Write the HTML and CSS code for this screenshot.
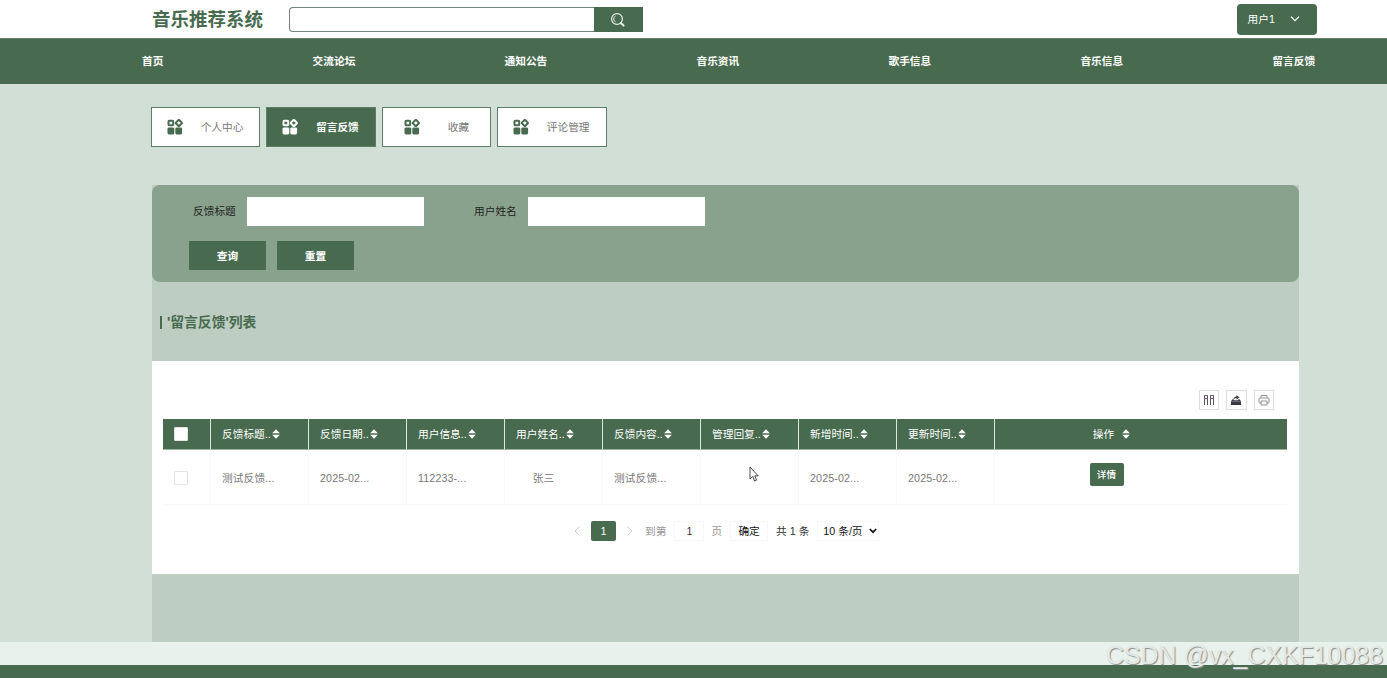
FILE: index.html
```
<!DOCTYPE html>
<html lang="zh-CN">
<head>
<meta charset="utf-8">
<title>音乐推荐系统</title>
<link rel="stylesheet" href="styles.css">
</head>
<body>
<svg width="0" height="0" class="defs">
	<symbol id="i-menu" viewBox="0 0 16 16">
		<rect x="1.5" y="1.7" width="4.7" height="4.5" rx=".8" fill="none" stroke="currentColor" stroke-width="2"/>
		<rect x="9.5" y="1.6" width="4.7" height="4.7" rx=".8" fill="none" stroke="currentColor" stroke-width="2" transform="rotate(45 11.85 3.95)"/>
		<rect x=".5" y="8.4" width="6.8" height="7" rx="1.4" fill="currentColor"/>
		<rect x="8.3" y="8.4" width="6.8" height="7" rx="1.4" fill="currentColor"/>
	</symbol>
	<symbol id="i-sort" viewBox="0 0 8 10">
		<path d="M4 .3 7.8 4.2H.2zM4 9.7 7.8 5.8H.2z" fill="currentColor"/>
	</symbol>
</svg>

<div class="header">
	<div class="logo">音乐推荐系统</div>
	<div class="search">
		<input type="text" class="search_txt">
		<a class="search_btn">
			<svg width="16" height="16" viewBox="0 0 16 16" fill="none" stroke="#e6f0e8"><circle cx="7" cy="7" r="5.4" stroke-width="1.2"/><path d="M5.6 10A3.3 3.3 0 0 1 5.6 4" stroke-width="1"/><path d="M10.8 11 13.6 13.6" stroke-width="2" stroke-linecap="round"/></svg>
		</a>
	</div>
	<div class="user">用户1
		<svg width="10" height="6" viewBox="0 0 10 6" fill="none" stroke="#fff" stroke-width="1.2"><path d="M1 .7 5 4.7 9 .7"/></svg>
	</div>
</div>

<ul class="nav">
	<li>首页</li>
	<li>交流论坛</li>
	<li>通知公告</li>
	<li>音乐资讯</li>
	<li>歌手信息</li>
	<li>音乐信息</li>
	<li>留言反馈</li>
</ul>

<ul class="tabs">
	<li><svg><use href="#i-menu"/></svg><span>个人中心</span></li>
	<li class="active"><svg><use href="#i-menu"/></svg><span>留言反馈</span></li>
	<li><svg><use href="#i-menu"/></svg><span>收藏</span></li>
	<li><svg><use href="#i-menu"/></svg><span>评论管理</span></li>
</ul>

<div class="main">
	<div class="filter">
		<div class="filter_row">
			<label>反馈标题</label><input type="text">
			<label>用户姓名</label><input type="text">
		</div>
		<div class="filter_btns">
			<a>查询</a>
			<a>重置</a>
		</div>
	</div>
	<h2 class="title">'留言反馈'列表</h2>

	<div class="list">
		<div class="tools">
			<a><svg width="12" height="12" viewBox="0 0 12 12" fill="none" stroke="#5c5262"><path d="M1.5 1.5h3v3h-3zM7.5 1.5h3v3h-3zM1.5 4.5V11M4.5 4.5V11M7.5 4.5V11M10.5 4.5V11"/></svg></a>
			<a><svg width="12" height="12" viewBox="0 0 12 12" fill="#3b3944"><path d="M1 7.2h10V11H1zM2.5 5.2h1.2v1h4.6v-1h1.2l1.3 1.7H1.2z"/><path d="M3.4 5.6C3.6 3.4 5 2.5 6.6 2.4V1L9.4 3.4 6.6 5.6V4.2C5.3 4.2 4.2 4.5 3.4 5.6z"/></svg></a>
			<a><svg width="12" height="12" viewBox="0 0 12 12" fill="none" stroke="#85898d" stroke-width=".9"><path d="M3 4V1.4h6V4M3 9H1.9Q1 9 1 8.1V5Q1 4 2 4h8q1 0 1 1v3.1Q11 9 10.1 9H9M3 7h6v4H3z"/></svg></a>
		</div>
		<table>
			<colgroup>
				<col class="c_check"><col class="c_txt"><col class="c_txt"><col class="c_txt"><col class="c_txt"><col class="c_txt"><col class="c_txt"><col class="c_txt"><col class="c_txt"><col>
			</colgroup>
			<tr>
				<th><i class="check"></i></th>
				<th>反馈标题..<svg><use href="#i-sort"/></svg></th>
				<th>反馈日期..<svg><use href="#i-sort"/></svg></th>
				<th>用户信息..<svg><use href="#i-sort"/></svg></th>
				<th>用户姓名..<svg><use href="#i-sort"/></svg></th>
				<th>反馈内容..<svg><use href="#i-sort"/></svg></th>
				<th>管理回复..<svg><use href="#i-sort"/></svg></th>
				<th>新增时间..<svg><use href="#i-sort"/></svg></th>
				<th>更新时间..<svg><use href="#i-sort"/></svg></th>
				<th class="op">操作<svg><use href="#i-sort"/></svg></th>
			</tr>
			<tr>
				<td><i class="check"></i></td>
				<td>测试反馈...</td>
				<td>2025-02...</td>
				<td>112233-...</td>
				<td class="name">张三</td>
				<td>测试反馈...</td>
				<td></td>
				<td>2025-02...</td>
				<td>2025-02...</td>
				<td class="op"><a class="btn">详情</a></td>
			</tr>
		</table>
		<div class="page">
			<svg class="arrow" viewBox="0 0 6 10"><path d="M5.5.7 1 5l4.5 4.3"/></svg>
			<span class="cur">1</span>
			<svg class="arrow" viewBox="0 0 6 10"><path d="M.5.7 5 5 .5 9.3"/></svg>
			<span class="go">到第</span>
			<span class="num">1</span>
			<span class="unit">页</span>
			<span class="ok">确定</span>
			<span class="total">共 1 条</span>
			<span class="limit">10 条/页<svg width="8" height="6" viewBox="0 0 8 6" fill="none" stroke="#111" stroke-width="1.7"><path d="M.8 1 4 4.2 7.2 1"/></svg></span>
		</div>
	</div>
</div>

<div class="copy"></div>
<div class="footer"></div>

<div class="watermark">CSDN @vx_CXKF10088</div>
<svg class="cursor" viewBox="0 0 10 16"><path d="M1 1v12l2.8-2.5L5.6 15l2-.9-1.9-4.2H9.2z" fill="#fff" stroke="#333" stroke-width=".9"/></svg>
</body>
</html>
```
FILE: styles.css
```
* {box-sizing:border-box;}
body {margin:0;height:678px;overflow:hidden;background:#d1dfd6;font:10.7px/16px "Liberation Sans","Noto Sans CJK SC",sans-serif;color:#333;}
ul {margin:0;padding:0;}
li {list-style:none;}
svg {flex:none;}
input {border:0;padding:0;background:#fff;outline:none;}
.defs {display:block;height:0;}

.header {height:38px;background:#fff;display:flex;padding-left:152px;}
.logo {width:137px;font-size:18.5px;line-height:39px;font-weight:bold;color:#486b4f;}
.search {width:353.5px;height:25px;margin-top:7px;display:flex;}
.search_txt {width:305px;border:1px solid #71857a;border-right:0;border-radius:4px 0 0 4px;}
.search_btn {width:49px;background:#486b4f;display:flex;align-items:center;justify-content:center;}
.user {width:80.5px;height:30.5px;margin:4px 70px 0 auto;padding:0 17px 0 11px;border-radius:4px;background:#486b4f;color:#fff;display:flex;align-items:center;justify-content:space-between;}

.nav {height:46px;background:#486b4f;display:flex;gap:149.2px;padding-left:142px;border-top:1px solid #5f7e68;}
.nav li {flex:none;color:#fff;font-weight:bold;line-height:45px;}

.tabs {display:flex;gap:6px;padding:23px 0 0 151px;}
.tabs li {width:109.4px;height:40px;background:#fff;border:1px solid #5f7e68;display:flex;align-items:center;justify-content:space-between;padding:0 16px 0 15px;color:#777;}
.tabs li svg {width:16px;height:16px;color:#486b4f;}
.tabs li:nth-child(3) {padding:0 21px;}
.tabs .active {background:#486b4f;color:#fff;font-weight:bold;}
.tabs .active svg {color:#fff;}

.main {width:1147px;height:457px;margin:38px 0 0 152px;background:#bdcdc1;}
.filter {height:97px;background:#89a28d;border-radius:8px;padding:12px 0 0 37px;}
.filter_row {display:flex;height:29px;align-items:center;}
.filter_row label {width:58px;padding:0 0 1px 4px;color:#222;}
.filter_row input {width:177px;height:29px;margin-right:46px;}
.filter_btns {display:flex;gap:11px;margin-top:15px;}
.filter_btns a {width:77px;height:29px;line-height:30px;background:#486b4f;color:#fff;font-weight:bold;text-align:center;}
.title {margin:34px 0 0 8px;height:13px;border-left:2px solid #486b4f;padding-left:5px;font-size:13.8px;line-height:13px;color:#486b4f;}

.list {margin-top:32px;height:213px;background:#fff;padding:29px 12px 0 11px;}
.tools {display:flex;justify-content:flex-end;gap:7px;padding-right:13px;height:29px;}
.tools a {width:20.5px;height:20px;border:1px solid #ddd;display:flex;align-items:center;justify-content:center;}
table {width:1124px;border-collapse:separate;border-spacing:0;table-layout:fixed;}
.c_check {width:48px;}
.c_txt {width:98px;}
th {height:31px;padding:0 0 0 11px;background:#486b4f;color:#fff;font-weight:normal;text-align:left;border-right:1px solid #dde6df;border-bottom:1px solid #9db3a2;white-space:nowrap;}
th svg {width:8px;height:10px;margin-left:1.5px;vertical-align:-1px;}
td {height:55px;padding:2px 0 0 11px;color:#777;letter-spacing:.12px;border-right:1px solid #f9f9f9;border-bottom:1px solid #f9f9f9;}
th:last-child,td:last-child {border-right:0;}
.check {display:block;width:14px;height:14px;border:1px solid #e4e4e4;border-radius:1px;background:#fff;}
.name {padding-right:20px;padding-left:0;text-align:center;}
th.op {text-align:center;padding:0 59px 0 0;}
.op svg {margin-left:8px;}
td.op {text-align:center;padding:0 69px 5px 0;}
.btn {display:inline-block;width:34px;height:23px;line-height:23px;background:#486b4f;border-radius:2px;color:#fff;font-size:9.6px;font-weight:500;}

.page {display:flex;align-items:center;height:20px;margin-top:16px;padding-left:411px;color:#333;}
.page span {flex:none;line-height:20px;}
.arrow {width:6px;height:10px;fill:none;stroke:#ccc;}
.cur {width:25px;margin:0 11px;background:#486b4f;border-radius:2px;color:#fff;text-align:center;}
.go {margin-left:12px;color:#999;}
.num {width:30px;margin-left:8px;border:1px solid #f8f8f8;text-align:center;}
.page .num,.page .ok,.page .limit {line-height:18px;}
.unit {margin-left:7px;color:#999;}
.ok {width:38px;margin-left:8px;border:1px solid #f8f8f8;text-align:center;color:#111;}
.total {margin-left:8px;}
.limit {width:62px;margin-left:8px;border:1px solid #f8f8f8;padding-left:5px;color:#111;}
.limit svg {margin-left:6px;vertical-align:1px;}

.copy {height:23px;background:#e8f1ec;}
.footer {height:13px;background:#486b4f;}

.watermark {position:absolute;right:4px;bottom:8px;font-size:24.9px;line-height:30px;color:#e3e8e5;text-shadow:1px 1px 1px #8a8f8c;}
.cursor {position:absolute;left:749px;top:466px;width:10px;height:16px;}
```
